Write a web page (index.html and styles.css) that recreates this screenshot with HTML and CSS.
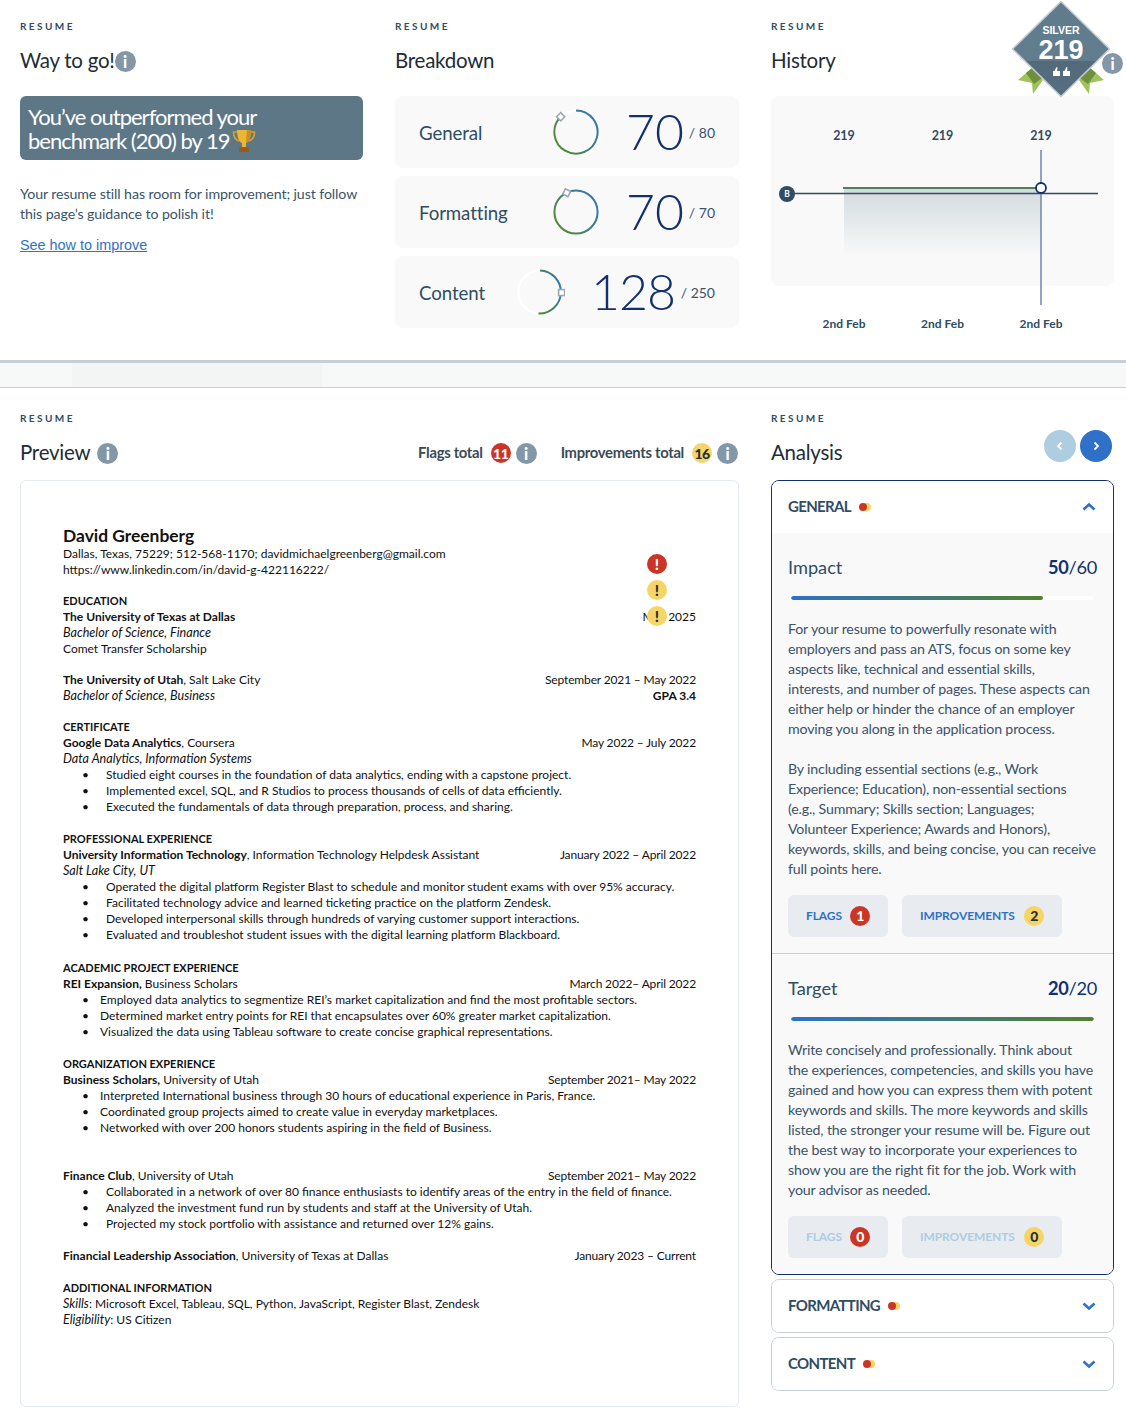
FILE: index.html
```html
<!DOCTYPE html>
<html lang="en">
<head>
<meta charset="utf-8">
<title>Resume</title>
<link rel="stylesheet" href="styles.css">
</head>
<body>
<section class="top">
  <div class="col">
    <div class="eyebrow">RESUME</div>
    <div class="head"><h2>Way to go!</h2><span class="info">i</span></div>
    <div class="banner">You’ve outperformed your<br>benchmark (200) by 19
      <svg class="trophy" viewBox="0 0 24 24" width="24" height="24"><path d="M5 3H1.500c0 5 2 8 6 9M19 3h3.500c0 5-2 8-6 9" fill="none" stroke="#d9a02a" stroke-width="1.600"/><path d="M5 1h14c0 7-2 12-5 13v4h-4v-4C7 13 5 8 5 1z" fill="#eab636"/><path d="M15 1h4c0 7-2 12-5 13z" fill="#c98f22"/><rect x="7" y="18" width="10" height="5" rx="1" fill="#9a5a1e"/></svg>
    </div>
    <p class="lead">Your resume still has room for improvement; just follow this page’s guidance to polish it!</p>
    <a class="link" href="#">See how to improve</a>
  </div>
  <div class="col">
    <div class="eyebrow">RESUME</div>
    <div class="head"><h2>Breakdown</h2></div>
    <div class="scores">
      <div class="score">
        <span class="score-name">General</span>
        <svg class="ring" viewBox="0 0 50 50" width="50" height="50"><defs><linearGradient id="g1" x1="1" y1="0" x2="0" y2="0.6"><stop offset="0" stop-color="#2f71c8"/><stop offset="1" stop-color="#4f8a35"/></linearGradient></defs><circle cx="25" cy="25" r="21.600" fill="none" stroke="#fff" stroke-width="2"/><path d="M25 3.400A21.600 21.600 0 1 1 9.700 9.700" fill="none" stroke="url(#g1)" stroke-width="2"/><rect x="6.800" y="6.800" width="5.800" height="5.800" transform="rotate(45 9.700 9.700)" fill="#fff" stroke="#9ca9b3" stroke-width="1.600"/></svg>
        <span class="big">70</span><span class="max">/ 80</span>
      </div>
      <div class="score">
        <span class="score-name">Formatting</span>
        <svg class="ring" viewBox="0 0 50 50" width="50" height="50"><circle cx="25" cy="25" r="21.600" fill="none" stroke="url(#g1)" stroke-width="2"/><rect x="12.800" y="2.800" width="5.800" height="5.800" transform="rotate(27 15.700 5.700)" fill="#fff" stroke="#9ca9b3" stroke-width="1.600"/></svg>
        <span class="big">70</span><span class="max">/ 70</span>
      </div>
      <div class="score">
        <span class="score-name">Content</span>
        <svg class="ring ring-wide" viewBox="0 0 50 50" width="50" height="50"><circle cx="25" cy="25" r="21.600" fill="none" stroke="#fff" stroke-width="2"/><path d="M25 3.400A21.600 21.600 0 0 1 23.500 46.600" fill="none" stroke="url(#g1)" stroke-width="2"/><rect x="43.600" y="22.600" width="6" height="6" fill="#fff" stroke="#9ca9b3" stroke-width="1.600"/></svg>
        <span class="big">128</span><span class="max">/ 250</span>
      </div>
    </div>
  </div>
  <div class="col col-history">
    <div class="eyebrow">RESUME</div>
    <div class="head"><h2>History</h2></div>
    <div class="chart">
      <svg class="chart-svg" viewBox="771 96 343 244" width="343" height="244">
        <defs><linearGradient id="fade" x1="0" y1="0" x2="0" y2="1"><stop offset="0" stop-color="#d3dade"/><stop offset="1" stop-color="#d3dade" stop-opacity="0"/></linearGradient></defs>
        <rect x="844" y="189" width="197" height="67" fill="url(#fade)"/>
        <path d="M843 188H1041" stroke="#4f8060" stroke-width="2"/>
        <path d="M787 193.500H1098" stroke="#2f4d63" stroke-width="1.500"/>
        <path d="M1041 150V305" stroke="#6c86b0" stroke-width="1.500"/>
        <circle cx="1041" cy="188" r="5" fill="#fff" stroke="#12306f" stroke-width="1.800"/>
        <circle cx="787" cy="194" r="8" fill="#2f4d63"/>
        <text class="c-b" x="787" y="197">B</text>
        <text class="c-val" x="844" y="140">219</text><text class="c-val" x="942.500" y="140">219</text><text class="c-val" x="1041" y="140">219</text>
        <text class="c-date" x="844" y="328">2nd Feb</text><text class="c-date" x="942.500" y="328">2nd Feb</text><text class="c-date" x="1041" y="328">2nd Feb</text>
      </svg>
    </div>
    <svg class="medal" viewBox="1006 0 120 100" width="120" height="100">
      <defs><linearGradient id="dia" x1="0" y1="0" x2="0" y2="1"><stop offset="0" stop-color="#5f7b8c"/><stop offset="0.62" stop-color="#617d8e"/><stop offset="0.63" stop-color="#536a7b"/><stop offset="1" stop-color="#566e7f"/></linearGradient></defs>
      <path d="M1018 80L1032 68L1043 80L1033 94L1032 83z" fill="#9cc45a"/>
      <path d="M1104 80L1090 68L1079 80L1089 94L1090 83z" fill="#9cc45a"/>
      <path d="M1026 73L1032 68L1042 78L1034 84z" fill="#6f8f3e"/>
      <path d="M1096 73L1090 68L1080 78L1088 84z" fill="#6f8f3e"/>
      <path d="M1061 1.500L1109.500 49L1061 96.500L1012.500 49z" fill="url(#dia)" stroke="#c3cbd0" stroke-width="1.600" stroke-linejoin="round"/>
      <text class="m-s" x="1061" y="34">SILVER</text>
      <text class="m-n" x="1061" y="59">219</text>
      <path d="M1053 76v-5h1.500l2-4 1 .5-.5 3.500h3v5zM1063 76v-5h1.500l2-4 1 .5-.5 3.500h3v5z" fill="#fff"/>
    </svg>
    <span class="info info-medal">i</span>
  </div>
</section>

<div class="band"><div class="band-tab"></div></div>

<section class="bottom">
  <div>
    <div class="eyebrow">RESUME</div>
    <div class="head head-low">
      <h2>Preview</h2><span class="info">i</span>
      <div class="totals">
        <span class="t-label">Flags total</span><span class="count red">11</span><span class="info">i</span>
        <span class="t-label t-gap">Improvements total</span><span class="count yellow">16</span><span class="info">i</span>
      </div>
    </div>
    <div class="paper">
      <div class="mark red m1">!</div><div class="mark yellow m2">!</div><div class="mark yellow m3">!</div>
      <div class="name">David Greenberg</div>
      <div class="r">Dallas, Texas, 75229; 512-568-1170; davidmichaelgreenberg@gmail.com</div>
      <div class="r">https://www.linkedin.com/in/david-g-422116222/</div>
      <div class="r r-short"></div>
      <div class="r"><b class="caps">EDUCATION</b></div>
      <div class="r"><b>The University of Texas at Dallas</b><span>May 2025</span></div>
      <div class="r"><i>Bachelor of Science, Finance</i></div>
      <div class="r">Comet Transfer Scholarship</div>
      <div class="r r-short"></div>
      <div class="r"><span><b>The University of Utah</b>, Salt Lake City</span><span>September 2021 – May 2022</span></div>
      <div class="r"><i>Bachelor of Science, Business</i><b>GPA 3.4</b></div>
      <div class="r r-short"></div>
      <div class="r"><b class="caps">CERTIFICATE</b></div>
      <div class="r"><span><b>Google Data Analytics</b>, Coursera</span><span>May 2022 – July 2022</span></div>
      <div class="r"><i>Data Analytics, Information Systems</i></div>
      <div class="b">Studied eight courses in the foundation of data analytics, ending with a capstone project.</div>
      <div class="b">Implemented excel, SQL, and R Studios to process thousands of cells of data efficiently.</div>
      <div class="b">Executed the fundamentals of data through preparation, process, and sharing.</div>
      <div class="r"></div>
      <div class="r"><b class="caps">PROFESSIONAL EXPERIENCE</b></div>
      <div class="r"><span><b>University Information Technology</b>, Information Technology Helpdesk Assistant</span><span>January 2022 – April 2022</span></div>
      <div class="r"><i>Salt Lake City, UT</i></div>
      <div class="b">Operated the digital platform Register Blast to schedule and monitor student exams with over 95% accuracy.</div>
      <div class="b">Facilitated technology advice and learned ticketing practice on the platform Zendesk.</div>
      <div class="b">Developed interpersonal skills through hundreds of varying customer support interactions.</div>
      <div class="b">Evaluated and troubleshot student issues with the digital learning platform Blackboard.</div>
      <div class="r r-tall"></div>
      <div class="r"><b class="caps">ACADEMIC PROJECT EXPERIENCE</b></div>
      <div class="r"><span><b>REI Expansion,</b> Business Scholars</span><span>March 2022– April 2022</span></div>
      <div class="b b-n">Employed data analytics to segmentize REI’s market capitalization and find the most profitable sectors.</div>
      <div class="b b-n">Determined market entry points for REI that encapsulates over 60% greater market capitalization.</div>
      <div class="b b-n">Visualized the data using Tableau software to create concise graphical representations.</div>
      <div class="r"></div>
      <div class="r"><b class="caps">ORGANIZATION EXPERIENCE</b></div>
      <div class="r"><span><b>Business Scholars,</b> University of Utah</span><span>September 2021– May 2022</span></div>
      <div class="b b-n">Interpreted International business through 30 hours of educational experience in Paris, France.</div>
      <div class="b b-n">Coordinated group projects aimed to create value in everyday marketplaces.</div>
      <div class="b b-n">Networked with over 200 honors students aspiring in the field of Business.</div>
      <div class="r"></div>
      <div class="r"></div>
      <div class="r"><span><b>Finance Club</b>, University of Utah</span><span>September 2021– May 2022</span></div>
      <div class="b">Collaborated in a network of over 80 finance enthusiasts to identify areas of the entry in the field of finance.</div>
      <div class="b">Analyzed the investment fund run by students and staff at the University of Utah.</div>
      <div class="b">Projected my stock portfolio with assistance and returned over 12% gains.</div>
      <div class="r"></div>
      <div class="r"><span><b>Financial Leadership Association</b>, University of Texas at Dallas</span><span>January 2023 – Current</span></div>
      <div class="r"></div>
      <div class="r"><b class="caps">ADDITIONAL INFORMATION</b></div>
      <div class="r"><span><i>Skills</i>: Microsoft Excel, Tableau, SQL, Python, JavaScript, Register Blast, Zendesk</span></div>
      <div class="r"><span><i>Eligibility</i>: US Citizen</span></div>
    </div>
  </div>
  <div>
    <div class="eyebrow">RESUME</div>
    <div class="head head-low">
      <h2>Analysis</h2>
      <div class="nav">
        <span class="nav-btn off"><svg viewBox="0 0 12 12" width="12" height="12"><path d="M7.500 2.500L4 6l3.500 3.500" fill="none" stroke="#fff" stroke-width="1.800"/></svg></span>
        <span class="nav-btn"><svg viewBox="0 0 12 12" width="12" height="12"><path d="M4.500 2.500L8 6l-3.500 3.500" fill="none" stroke="#fff" stroke-width="1.800"/></svg></span>
      </div>
    </div>
    <div class="acc acc-open">
      <div class="acc-head">
        <span class="acc-title">GENERAL</span><span class="dots"></span>
        <svg class="chev" viewBox="0 0 14 10" width="14" height="10"><path d="M1.500 7.500L7 2.500l5.500 5" fill="none" stroke="#2f71c8" stroke-width="2.600"/></svg>
      </div>
      <div class="part">
        <div class="part-head"><span>Impact</span><span class="pts"><b>50</b>/60</span></div>
        <div class="track"><div class="fill" style="width:83.300%"></div></div>
        <p>For your resume to powerfully resonate with<br>employers and pass an ATS, focus on some key<br>aspects like, technical and essential skills,<br>interests, and number of pages. These aspects can<br>either help or hinder the chance of an employer<br>moving you along in the application process.</p>
        <p>By including essential sections (e.g., Work<br>Experience; Education), non-essential sections<br>(e.g., Summary; Skills section; Languages;<br>Volunteer Experience; Awards and Honors),<br>keywords, skills, and being concise, you can receive<br>full points here.</p>
        <div class="btns">
          <span class="btn btn-flags">FLAGS<span class="count red">1</span></span>
          <span class="btn btn-imp">IMPROVEMENTS<span class="count yellow">2</span></span>
        </div>
      </div>
      <div class="part part-next">
        <div class="part-head"><span>Target</span><span class="pts"><b>20</b>/20</span></div>
        <div class="track"><div class="fill" style="width:100%"></div></div>
        <p>Write concisely and professionally. Think about<br>the experiences, competencies, and skills you have<br>gained and how you can express them with potent<br>keywords and skills. The more keywords and skills<br>listed, the stronger your resume will be. Figure out<br>the best way to incorporate your experiences to<br>show you are the right fit for the job. Work with<br>your advisor as needed.</p>
        <div class="btns btns-off">
          <span class="btn btn-flags">FLAGS<span class="count red">0</span></span>
          <span class="btn btn-imp">IMPROVEMENTS<span class="count yellow">0</span></span>
        </div>
      </div>
    </div>
    <div class="acc">
      <div class="acc-head">
        <span class="acc-title">FORMATTING</span><span class="dots"></span>
        <svg class="chev" viewBox="0 0 14 10" width="14" height="10"><path d="M1.500 2.500L7 7.500l5.500-5" fill="none" stroke="#2f71c8" stroke-width="2.600"/></svg>
      </div>
    </div>
    <div class="acc">
      <div class="acc-head">
        <span class="acc-title">CONTENT</span><span class="dots"></span>
        <svg class="chev" viewBox="0 0 14 10" width="14" height="10"><path d="M1.500 2.500L7 7.500l5.500-5" fill="none" stroke="#2f71c8" stroke-width="2.600"/></svg>
      </div>
    </div>
  </div>
</section>
</body>
</html>
```

FILE: styles.css
```css
* { box-sizing: border-box; }
html, body { margin: 0; padding: 0; }
body { font-family: Lato, "Liberation Sans", sans-serif; color: #2f4d63; background: #fff; width: 1126px; height: 1424px; overflow: hidden; }
h2 { margin: -2px 0 0; font-size: 20.500px; font-weight: 400; color: #212c35; letter-spacing: -0.250px; line-height: 30px; }
p { margin: 0; }

.top { height: 360px; padding: 20px 12px 0 20px; display: grid; grid-template-columns: 343px 344px 343px; column-gap: 32px; }
.col { position: relative; }
.eyebrow { font-size: 10px; font-weight: 700; letter-spacing: 2.430px; line-height: 13px; color: #2f4d63; }
.head { display: flex; align-items: center; height: 30px; margin-top: 13px; margin-bottom: 20px; }
.head-low { margin-bottom: 12px; }
.info { display: inline-flex; width: 21px; height: 21px; flex: none; border-radius: 50%; background: #8497a6; color: #fff; align-items: center; justify-content: center; font-size: 16px; font-weight: 900; font-family: Lato, sans-serif; letter-spacing: 0; }

.banner { height: 64px; border-radius: 6px; background: #5e7786; color: #fff; font-size: 22px; line-height: 24px; letter-spacing: -1px; padding: 9px 8px 0; }
.trophy { vertical-align: -4px; margin-left: -2px; }
.lead { margin-top: 24px; font-size: 14.200px; line-height: 20px; color: #3a5368; letter-spacing: -0.100px; }
.link { display: block; margin-top: 11px; font-family: "Liberation Sans", sans-serif; font-size: 14.400px; line-height: 20px; color: #2f71c8; }

.scores { display: flex; flex-direction: column; gap: 8px; }
.score { height: 72px; border-radius: 8px; background: #f9f9f9; display: flex; align-items: center; padding: 0 24px; }
.score-name { font-size: 18.700px; color: #2f4d63; letter-spacing: -0.100px; width: 132px; flex: none; margin-top: 1px; }
.ring { flex: none; }
.ring-wide { margin-left: -36px; }
.big { font-size: 50px; font-weight: 300; color: #12306f; line-height: 68px; margin-bottom: 2px; width: 54px; white-space: nowrap; margin-left: auto; text-align: right; }
.score:last-child .big { width: 80px; letter-spacing: -1px; }
.max { font-size: 14px; color: #3a5368; width: 35px; text-align: right; flex: none; white-space: nowrap; }
.score:last-child .max { width: 44px; }

.chart { position: relative; height: 190px; border-radius: 8px; background: #f9f9f9; }
.chart-svg { position: absolute; left: 0; top: 0; overflow: visible; }
.c-b { font-size: 8.500px; font-weight: 700; fill: #fff; text-anchor: middle; }
.c-val { font-size: 12.500px; font-weight: 700; fill: #2f4d63; text-anchor: middle; }
.c-date { font-size: 12px; font-weight: 700; fill: #2f4d63; text-anchor: middle; }
.medal { position: absolute; left: 235px; top: -20px; }
.m-s { font-family: "Liberation Sans", sans-serif; font-size: 10.500px; font-weight: 700; fill: #fff; text-anchor: middle; }
.m-n { font-family: "Liberation Sans", sans-serif; font-size: 27px; font-weight: 700; fill: #fff; text-anchor: middle; }
.info-medal { position: absolute; left: 331px; top: 33px; }

.band { height: 28px; background: #f7f8f8; border-top: 3px solid #c5d0d6; border-bottom: 1px solid #c5d0d6; padding-left: 72px; }
.band-tab { width: 250px; height: 24px; background: #f3f4f4; }

.bottom { padding: 24px 12px 0 20px; display: grid; grid-template-columns: 719px 343px; column-gap: 32px; }
.bottom .head h2 { margin-right: 7px; }
.totals { margin-left: auto; display: flex; align-items: center; gap: 5px; margin-right: 1px; font-size: 14.800px; font-weight: 700; color: #2f4d63; letter-spacing: -0.300px; }
.t-label { color: #3a4b57; margin: -2px 3px 0 0; }
.t-gap { margin-left: 19px; }
.count { display: inline-flex; width: 20px; height: 20px; border-radius: 50%; align-items: center; justify-content: center; font-size: 14px; font-weight: 900; flex: none; letter-spacing: -0.500px; }
.red { background: #cb3526; color: #fff; }
.yellow { background: #f6d465; color: #22303a; }

.paper { position: relative; height: 927px; border: 1px solid #e5eaee; border-radius: 6px; padding: 44px 42px 0; font-size: 12px; color: #111; }
.paper i { font-size: 12.600px; }
.caps { font-size: 11px; }
.name { font-size: 17.400px; font-weight: 700; line-height: 21px; height: 21px; }
.r { display: flex; justify-content: space-between; height: 16px; line-height: 16px; white-space: nowrap; }
.r span + span { letter-spacing: -0.150px; }
.r-short { height: 15px; }
.r-tall { height: 17px; }
.b { display: flex; height: 16px; line-height: 16px; padding-left: 19px; white-space: nowrap; }
.b::before { content: "•"; width: 24px; flex: none; }
.b-n::before { width: 18px; }
.mark { position: absolute; left: 626px; width: 20px; height: 20px; border-radius: 50%; display: flex; align-items: center; justify-content: center; font-size: 15px; font-weight: 900; }
.m1 { top: 73px; }
.m2 { top: 99px; }
.m3 { top: 125px; }

.nav { margin-left: auto; margin-right: 2px; display: flex; gap: 4px; margin-top: -14px; }
.nav-btn { width: 32px; height: 32px; border-radius: 50%; background: #2f71c8; display: flex; align-items: center; justify-content: center; }
.nav-btn.off { background: #aecde0; }

.acc { border: 1px solid #c5d0d6; border-radius: 8px; margin-bottom: 4px; overflow: hidden; }
.acc-open { border-color: #12306f; }
.acc-head { height: 52px; display: flex; align-items: center; padding: 0 16px; background: #fff; }
.acc-title { font-size: 15px; font-weight: 700; letter-spacing: -0.650px; color: #2f4d63; margin-top: -2px; }
.dots { position: relative; width: 12px; height: 8px; margin-left: 8px; }
.dots::before, .dots::after { content: ""; position: absolute; top: 0; width: 8px; height: 8px; border-radius: 50%; }
.dots::before { left: 4px; background: #f6d465; }
.dots::after { left: 0; background: #cb3526; }
.chev { margin-left: auto; margin-right: 1px; }
.part { background: #f9f9f9; padding: 20px 16px 16px; }
.part-next { border-top: 1px solid #c5d0d6; }
.part-head { display: flex; justify-content: space-between; height: 30px; line-height: 28px; font-size: 18.200px; color: #2f4d63; }
.pts { color: #12306f; letter-spacing: -0.300px; }
.pts b { font-weight: 700; }
.track { height: 4px; margin: 13px 3px 19px; border-radius: 2px; background: #fff; overflow: hidden; }
.fill { height: 100%; border-radius: 2px; background: linear-gradient(90deg, #2f71c8, #538030); }
.part p { font-size: 14.200px; line-height: 20px; color: #3a5368; letter-spacing: -0.170px; margin-bottom: 20px; white-space: nowrap; }
.part p:last-of-type { margin-bottom: 16px; }
.btns { display: flex; gap: 14px; }
.btn { height: 42px; border-radius: 6px; background: #e8ebf0; display: flex; align-items: center; justify-content: space-between; padding: 0 18px 1px; font-size: 12px; font-weight: 700; letter-spacing: -0.080px; color: #2f71c8; }
.btn-flags { width: 100px; }
.btn-imp { width: 160px; }
.btns-off .btn { color: #aecde0; }
```
